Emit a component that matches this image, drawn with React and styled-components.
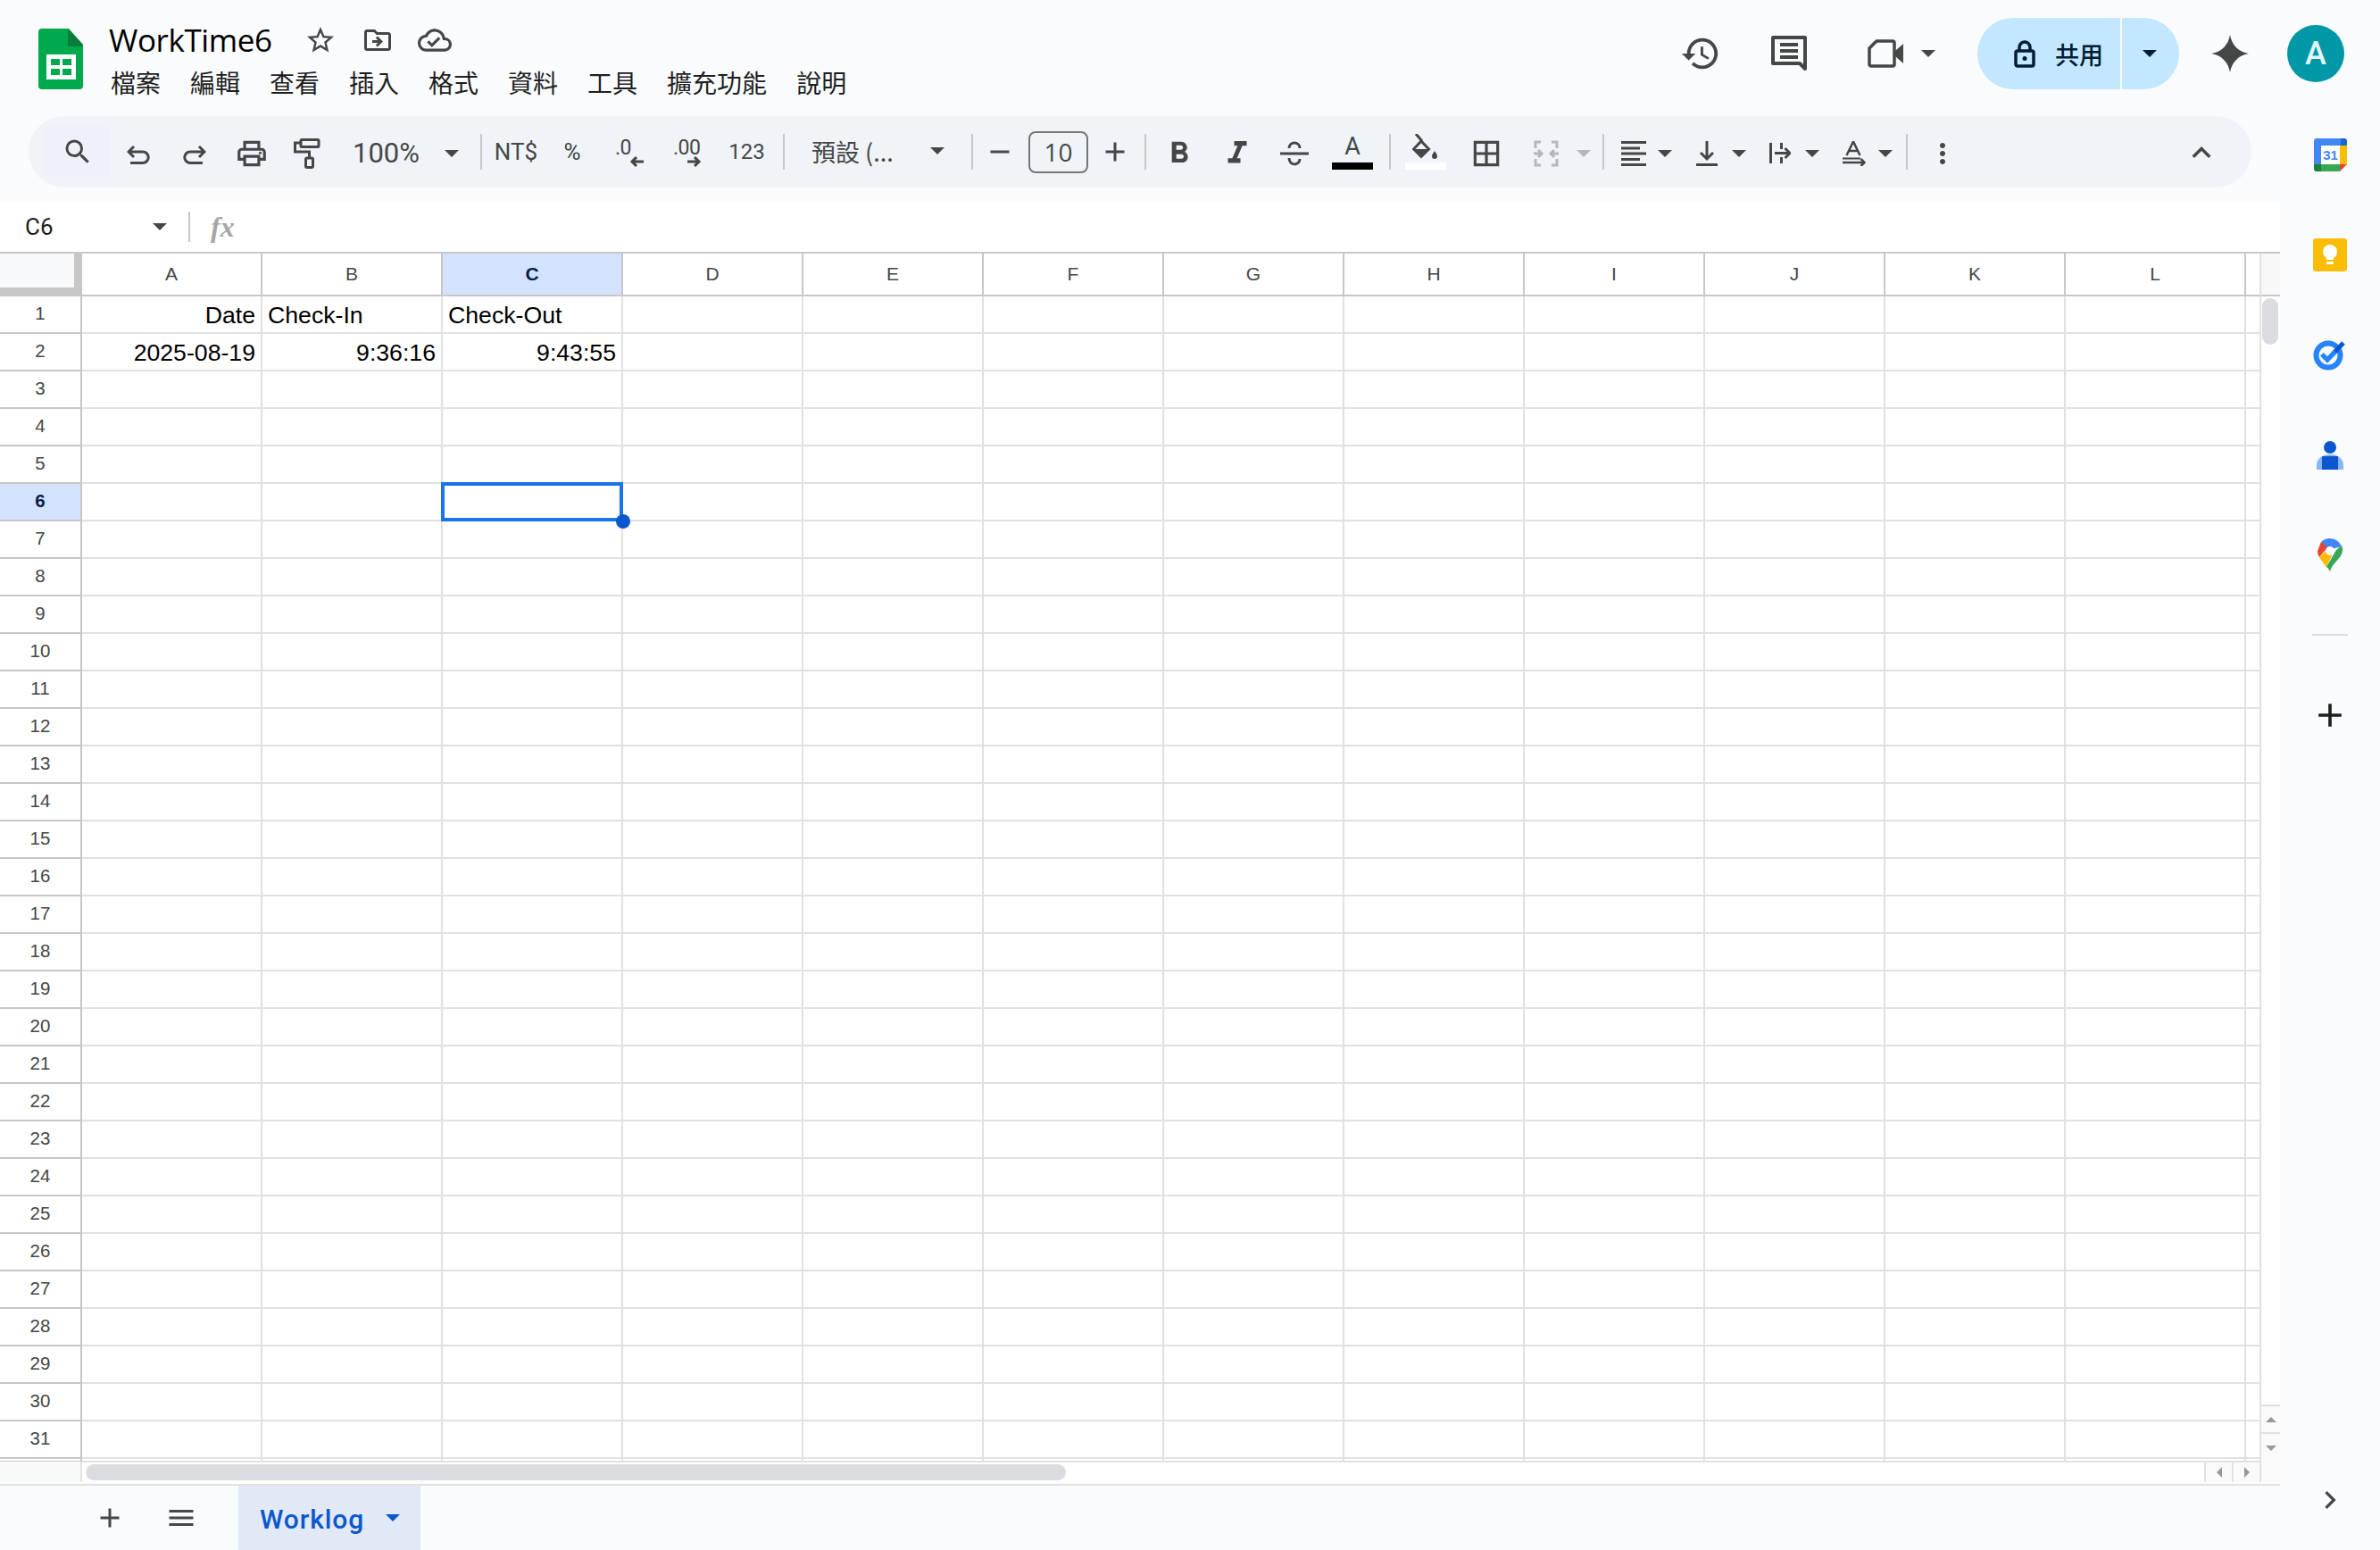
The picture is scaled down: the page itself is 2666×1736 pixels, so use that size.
import React from "react";
import styled, { createGlobalStyle } from "styled-components";
import {
  MdSearch,
  MdOutlinePrint,
  MdFormatBold,
  MdFormatItalic,
  MdBorderAll,
  MdKeyboardArrowUp,
  MdMoreVert,
  MdStarBorder,
  MdOutlineDriveFileMove,
  MdOutlineCloudDone,
  MdHistory,
  MdAdd,
  MdMenu,
  MdChevronRight,
  MdRemove,
} from "react-icons/md";

const INK = "#444746";
const UI_FONT = `"Open Sans", "Noto Sans CJK TC", sans-serif`;
const CJK_FONT = `"Noto Sans CJK TC", "Noto Sans", sans-serif`;
const CELL_FONT = `"Liberation Sans", Arial, sans-serif`;
const LINE = "#e1e1e1";
const HEAD_LINE = "#c7c7c7";

const GlobalStyle = createGlobalStyle`
  html, body { margin: 0; padding: 0; background: #f9fbfd; }
  * { box-sizing: border-box; }
`;

const Page = styled.div`
  width: 2666px;
  height: 1736px;
  overflow: hidden;
  background: #f9fbfd;
  display: flex;
  flex-direction: column;
  color: ${INK};
  font-family: ${UI_FONT};
`;

/* top header */
const Header = styled.header`
  height: 130px;
  flex: none;
  display: flex;
  padding-left: 43px;
`;
const LogoBox = styled.div`
  width: 50px;
  padding-top: 32px;
  margin-right: 29px;
`;
const TitleBlock = styled.div`
  padding-top: 23px;
`;
const TitleRow = styled.div`
  display: flex;
  align-items: center;
  height: 44px;
`;
const DocTitle = styled.div`
  font-size: 35px;
  line-height: 44px;
  color: #000;
  width: 220px;
  letter-spacing: -0.4px;
`;
const TitleIcon = styled.div`
  width: 64px;
  display: flex;
  justify-content: center;
  font-size: ${(p) => p.$size || 36}px;
  color: ${INK};
  margin-left: ${(p) => p.$ml || 0}px;
`;
const MenuRow = styled.nav`
  display: flex;
  gap: 33px;
  margin-top: 5px;
  padding-left: 2px;
`;
const MenuItem = styled.span`
  font-family: ${CJK_FONT};
  font-size: 28px;
  line-height: 40px;
  color: #1f1f1f;
`;
const HeaderRight = styled.div`
  margin-left: auto;
  display: flex;
  align-items: center;
  height: 80px;
  margin-top: 20px;
  padding-right: 40px;
`;
const HeaderBtn = styled.div`
  width: ${(p) => p.$w}px;
  display: flex;
  justify-content: center;
  align-items: center;
  color: ${INK};
  font-size: 46px;
`;
const MeetBtn = styled.div`
  width: 161px;
  padding-left: 38px;
  display: flex;
  align-items: center;
  gap: 20px;
`;
const ShareBtn = styled.div`
  width: 226px;
  height: 80px;
  display: flex;
  color: #001d35;
`;
const ShareMain = styled.div`
  width: 160px;
  background: #c2e7ff;
  border-radius: 40px 0 0 40px;
  display: flex;
  align-items: center;
  padding-left: 41px;
  gap: 22px;
`;
const ShareLabel = styled.span`
  font-family: ${CJK_FONT};
  font-size: 27px;
  font-weight: 500;
`;
const ShareArrow = styled.div`
  margin-left: 2px;
  flex: 1;
  background: #c2e7ff;
  border-radius: 0 40px 40px 0;
  display: flex;
  align-items: center;
  justify-content: center;
  padding-right: 2px;
`;
const Avatar = styled.div`
  width: 64px;
  height: 64px;
  margin-left: 7px;
  border-radius: 50%;
  background: #0097a7;
  color: #e3f6f8;
  display: flex;
  align-items: center;
  justify-content: center;
  font-family: "Roboto", sans-serif;
  font-weight: 500;
  font-size: 36px;
`;

const Caret = styled.span`
  display: block;
  flex: none;
  width: 0;
  height: 0;
  border-left: 8px solid transparent;
  border-right: 8px solid transparent;
  border-top: 8px solid ${(p) => p.$color || INK};
`;

/* body */
const Body = styled.div`
  flex: 1;
  display: flex;
  min-height: 0;
`;
const Main = styled.main`
  width: 2554px;
  flex: none;
  display: flex;
  flex-direction: column;
`;

/* toolbar */
const Toolbar = styled.div`
  width: 2490px;
  height: 80px;
  margin: 0 0 16px 32px;
  flex: none;
  padding-left: 18px;
  background: #f0f4f9;
  border-radius: 40px;
  display: flex;
  align-items: center;
  font-size: 36px;
  color: ${INK};
`;
const ToolBtn = styled.div`
  width: ${(p) => p.$w}px;
  height: 56px;
  flex: none;
  display: flex;
  align-items: center;
  justify-content: center;
  background: ${(p) => (p.$active ? "#edf1fa" : "transparent")};
  font-size: ${(p) => p.$size || 36}px;
  padding-top: ${(p) => p.$dy || 0}px;
`;
const DropBtn = styled.div`
  width: ${(p) => p.$w}px;
  height: 56px;
  flex: none;
  display: flex;
  align-items: center;
  padding-left: ${(p) => p.$pl}px;
  padding-top: 3px;
  gap: ${(p) => p.$gap}px;
  font-size: 36px;
`;
const ToolText = styled.span`
  font-size: ${(p) => p.$size || 26}px;
  font-family: ${(p) => (p.$cjk ? CJK_FONT : `"Roboto", sans-serif`)};
  white-space: nowrap;
`;
const FontDrop = styled.div`
  width: 209px;
  flex: none;
  padding: 0 30px 2px;
  display: flex;
  align-items: center;
  justify-content: space-between;
`;
const ToolSep = styled.div`
  width: 2px;
  height: 40px;
  flex: none;
  margin-left: ${(p) => p.$ml || 0}px;
  background: ${HEAD_LINE};
`;
const SizeBox = styled.div`
  width: 67px;
  height: 47px;
  margin-left: 2px;
  flex: none;
  border: 2px solid #747775;
  border-radius: 8px;
  display: flex;
  align-items: center;
  justify-content: center;
  font-size: 28px;
  font-family: ${UI_FONT};
`;
const ColorStack = styled.div`
  display: flex;
  flex-direction: column;
  align-items: center;
  width: 46px;
  height: 40px;
  justify-content: space-between;
`;
const ColorLetter = styled.span`
  font-family: "Roboto", sans-serif;
  font-size: 27px;
  line-height: 28px;
`;
const ColorBar = styled.div`
  width: 46px;
  height: 8px;
  flex: none;
  background: ${(p) => p.$color};
`;
const DecimalIcon = styled.div`
  width: 32px;
  display: flex;
  flex-direction: column;
  height: 30px;
  line-height: 18px;
  font-family: "Roboto", sans-serif;
  font-size: 23px;
  justify-content: space-between;
  letter-spacing: -0.5px;
`;
const DecimalArrow = styled.div`
  align-self: flex-end;
  line-height: 0;
`;
const ChevronBtn = styled(ToolBtn)`
  margin-left: auto;
  font-size: 42px;
`;

/* formula bar */
const FormulaBar = styled.div`
  height: 56px;
  flex: none;
  background: #fff;
  display: flex;
  align-items: center;
`;
const NameBox = styled.div`
  width: 211px;
  padding: 0 24px 0 28px;
  display: flex;
  align-items: center;
  justify-content: space-between;
  font-size: 26px;
  color: #1f1f1f;
  font-family: "Roboto", sans-serif;
`;
const FormulaSep = styled.div`
  width: 2px;
  height: 34px;
  background: ${HEAD_LINE};
`;
const FxMark = styled.span`
  margin-left: 23px;
  font-family: "Liberation Serif", serif;
  font-style: italic;
  font-weight: 700;
  font-size: 32px;
  color: #a6a6a6;
`;

/* sheet */
const SheetRow = styled.div`
  display: flex;
  flex: none;
  border-top: 2px solid ${HEAD_LINE};
  background: #fff;
`;
const Grid = styled.div`
  display: grid;
  grid-template-columns: 92px repeat(12, 202px) 17px;
  grid-template-rows: 48px repeat(31, 42px) 3px;
  flex: none;
`;
const Corner = styled.div`
  background: ${HEAD_LINE};
`;
const CornerInner = styled.div`
  width: 83px;
  height: 38px;
  background: #f8f9fa;
`;
const ColHead = styled.div`
  border-right: 2px solid ${HEAD_LINE};
  border-bottom: 2px solid ${HEAD_LINE};
  background: ${(p) => (p.$selected ? "#d3e3fd" : "#fff")};
  color: ${(p) => (p.$selected ? "#041e49" : INK)};
  font-weight: ${(p) => (p.$selected ? 700 : 400)};
  font-family: ${CELL_FONT};
  font-size: 21px;
  display: flex;
  align-items: center;
  justify-content: center;
`;
const RowHead = styled(ColHead)`
  font-size: 20.5px;
  padding-bottom: 2px;
`;
const ColEnd = styled.div`
  border-right: 2px solid ${LINE};
  border-bottom: 2px solid ${HEAD_LINE};
`;
const Cell = styled.div`
  position: relative;
  border-right: 2px solid ${LINE};
  border-bottom: 2px solid ${LINE};
  padding: 2px 6px 0;
  display: flex;
  align-items: center;
  justify-content: ${(p) => (p.$right ? "flex-end" : "flex-start")};
  font-family: ${CELL_FONT};
  font-size: 26.67px;
  color: #000;
  white-space: nowrap;
`;
const Selection = styled.div`
  position: absolute;
  left: -2px;
  top: -2px;
  right: -2px;
  bottom: -2px;
  border: 4px solid #1a73e8;
  z-index: 2;
`;
const SelectionHandle = styled.div`
  position: absolute;
  right: -12px;
  bottom: -12px;
  width: 16px;
  height: 16px;
  border-radius: 50%;
  background: #0b57d0;
`;
const VScroll = styled.div`
  width: 21px;
  display: flex;
  flex-direction: column;
  background: #fff;
`;
const VScrollHead = styled.div`
  height: 48px;
  flex: none;
  background: #f8f8f8;
  border-bottom: 2px solid ${HEAD_LINE};
`;
const VThumb = styled.div`
  width: 18px;
  height: 52px;
  margin: 2px 0 0 1px;
  border-radius: 9px;
  background: #dadce0;
`;
const VArrows = styled.div`
  margin-top: auto;
`;
const ScrollBtn = styled.div`
  height: ${(p) => p.$h || 31}px;
  background: #fafafa;
  border-top: 2px solid ${LINE};
  display: flex;
  align-items: center;
  justify-content: center;
`;
const Tri = styled.span`
  display: block;
  width: 0;
  height: 0;
  border-left: 6px solid ${(p) => (p.$dir === "right" ? "#999" : "transparent")};
  border-right: 6px solid ${(p) => (p.$dir === "left" ? "#999" : "transparent")};
  border-top: 6px solid ${(p) => (p.$dir === "down" ? "#999" : "transparent")};
  border-bottom: 6px solid ${(p) => (p.$dir === "up" ? "#999" : "transparent")};
  ${(p) => (p.$dir === "up" ? "border-top-width: 0;" : "")}
  ${(p) => (p.$dir === "down" ? "border-bottom-width: 0;" : "")}
  ${(p) => (p.$dir === "left" ? "border-left-width: 0;" : "")}
  ${(p) => (p.$dir === "right" ? "border-right-width: 0;" : "")}
`;
const HScrollRow = styled.div`
  height: 25px;
  flex: none;
  display: flex;
  background: #fff;
  border-bottom: 2px solid #fff;
`;
const HLeft = styled.div`
  width: 92px;
  flex: none;
  background: #f8f9fa;
  border-right: 2px solid ${LINE};
`;
const HTrack = styled.div`
  flex: 1;
  padding: 3px 0 0 4px;
`;
const HThumb = styled.div`
  width: 1098px;
  height: 18px;
  border-radius: 9px;
  background: #dadce0;
`;
const HBtn = styled.div`
  width: ${(p) => p.$w}px;
  flex: none;
  background: #fafafa;
  border-left: 2px solid ${LINE};
  display: flex;
  align-items: center;
  justify-content: center;
`;

/* tabs */
const TabBar = styled.div`
  flex: 1;
  border-top: 2px solid #e1e3e1;
  display: flex;
  align-items: stretch;
`;
const TabTool = styled.div`
  width: ${(p) => p.$w}px;
  flex: none;
  display: flex;
  align-items: center;
  justify-content: center;
  font-size: 36px;
  color: ${INK};
`;
const SheetTab = styled.div`
  width: 204px;
  flex: none;
  background: #e1e9f7;
  display: flex;
  align-items: center;
  padding-left: 24px;
  gap: 24px;
  color: #0b57d0;
`;
const TabName = styled.span`
  font-family: "Roboto", sans-serif;
  font-weight: 500;
  font-size: 30px;
  letter-spacing: 0.9px;
  padding-top: 2px;
`;

/* right rail */
const SideRail = styled.aside`
  flex: 1;
  display: flex;
  flex-direction: column;
  align-items: center;
  padding-top: 25px;
`;
const RailIcon = styled.div`
  height: 37px;
  margin-bottom: ${(p) => p.$mb}px;
  display: flex;
  align-items: center;
  justify-content: center;
`;
const RailDivider = styled.div`
  width: 40px;
  height: 2px;
  background: #dadce0;
  margin-bottom: 67px;
`;
const RailPlus = styled.div`
  font-size: 44px;
  line-height: 0;
  color: #1f1f1f;
`;
const RailFoot = styled.div`
  margin-top: auto;
  padding-bottom: 36px;
  font-size: 40px;
  line-height: 0;
  color: ${INK};
`;

/* drawings */
const Stroke = ({ w = 36, h = 36, sw = 3, color = "currentColor", children }) => (
  <svg width={w} height={h} viewBox={`0 0 ${w} ${h}`} fill="none" stroke={color} strokeWidth={sw}>
    {children}
  </svg>
);

const SheetsLogo = () => (
  <svg width="50" height="68" viewBox="0 0 50 68">
    <path d="M4 0h30l16 18v46a4 4 0 0 1-4 4H4a4 4 0 0 1-4-4V4a4 4 0 0 1 4-4z" fill="#00a94b" />
    <path d="M33 0l17 18v2H33z" fill="#0a7d3a" />
    <path d="M9 29h33v28H9z" fill="#fff" />
    <path d="M14 34h10v7H14zM27 34h10v7H27zM14 45h10v7H14zM27 45h10v7H27z" fill="#00a94b" />
  </svg>
);
const CommentIcon = () => (
  <Stroke w={40} h={40} sw={4}>
    <path d="M2 2h36v35l-6-6H2z" strokeLinejoin="round" />
    <path d="M10 10h20M10 17h20M10 24h20" />
  </Stroke>
);
const MeetIcon = () => (
  <Stroke w={40} h={32} sw={3.5}>
    <path d="M10 2h18a2 2 0 0 1 2 2v24a2 2 0 0 1-2 2H4a2 2 0 0 1-2-2V10z" strokeLinejoin="round" />
    <path d="M31 13l9-8v22l-9-8z" fill="currentColor" stroke="none" />
  </Stroke>
);
const SparkIcon = () => (
  <svg width="42" height="42" viewBox="0 0 42 42">
    <path d="M21 0c2 11 9 19 21 21-12 2-19 10-21 21-2-11-9-19-21-21C12 19 19 11 21 0z" fill={INK} />
  </svg>
);
const LockIcon = () => (
  <Stroke w={24} h={31} sw={3.5}>
    <path d="M6 12V8a6 6 0 0 1 12 0v4" />
    <rect x="2" y="12" width="20" height="17" rx="2" />
    <circle cx="12" cy="20.5" r="2.5" fill="currentColor" stroke="none" />
  </Stroke>
);
const UndoIcon = ({ flip }) => (
  <Stroke w={26} h={22}>
    <g transform={flip ? "matrix(-1 0 0 1 26 0)" : undefined}>
      <path d="M8 2L2 8l6 6M2 8h16a6 6 0 0 1 0 12.5H4" />
    </g>
  </Stroke>
);
const RollerIcon = () => (
  <Stroke w={30} h={34} sw={3}>
    <rect x="8" y="1.5" width="20" height="8" rx="1" />
    <path d="M8 5H1.5v10H17.5v7" />
    <rect x="13.5" y="22" width="8" height="10.5" rx="1.5" />
  </Stroke>
);
const StrikeIcon = () => (
  <Stroke w={34} h={34}>
    <path d="M1 17h32" />
    <path d="M11 11c0-8 12-8 12 0M11 22c0 9 12 9 12 1" />
  </Stroke>
);
const BucketIcon = () => (
  <svg width="30" height="28" viewBox="0 0 30 28">
    <path d="M4 0l7 8" fill="none" stroke={INK} strokeWidth="3" />
    <path d="M10 8l8.5 9L10 25.5 1.5 17z" fill="none" stroke={INK} strokeWidth="3" />
    <path d="M1 17h18L10 26z" fill={INK} />
    <path d="M25 19c2 3 3 4 3 6a3 3 0 0 1-6 0c0-2 1-3 3-6z" fill={INK} />
  </svg>
);
const MergeIcon = () => (
  <Stroke w={30} h={30} color="#b4b7b9">
    <path d="M9 2H3v7M21 2h6v7M9 28H3v-7M21 28h6v-7" />
    <path d="M1 15h9M6 11l4 4-4 4M29 15h-9M24 11l-4 4 4 4" />
  </Stroke>
);
const AlignIcon = () => (
  <Stroke w={28} h={28}>
    <path d="M0 1.5h28M0 8h21M0 14h28M0 20.5h21M0 26.5h28" />
  </Stroke>
);
const VAlignIcon = () => (
  <Stroke w={24} h={28}>
    <path d="M12 0v20M5 13l7 7 7-7" />
    <path d="M0 26.5h24" />
  </Stroke>
);
const WrapIcon = () => (
  <Stroke w={24} h={24}>
    <path d="M1.5 0v23M13.5 0v7M13.5 16v7M6 11.5h17M17.5 6l5.5 5.5-5.5 5.5" />
  </Stroke>
);
const RotateIcon = () => (
  <Stroke w={26} h={28} sw={2.5}>
    <path d="M4.5 16L12 0.5 19.5 16M7 11h10" />
    <path d="M0 19.5h20" strokeWidth="2" />
    <path d="M0 24h24M20.5 20l4 4-4 4" />
  </Stroke>
);
const SmallArrow = ({ left }) => (
  <svg width="16" height="12" viewBox="0 0 16 12" fill="none" stroke={INK} strokeWidth="3">
    {left ? <path d="M16 6H3M8 1L3 6l5 5" /> : <path d="M0 6h13M8 1l5 5-5 5" />}
  </svg>
);

const CalendarIcon = () => (
  <svg width="37" height="37" viewBox="0 0 37 37">
    <path d="M3 0h28v8H8v21H0V3a3 3 0 0 1 3-3z" fill="#4285f4" />
    <path d="M30 0h4a3 3 0 0 1 3 3v5h-7z" fill="#1967d2" />
    <path d="M29 8h8v21h-8z" fill="#fbbc04" />
    <path d="M8 29h21v8H8z" fill="#34a853" />
    <path d="M0 29h8v8H3a3 3 0 0 1-3-3z" fill="#188038" />
    <path d="M29 29h8l-8 8z" fill="#ea4335" />
    <rect x="8" y="8" width="21" height="21" fill="#fff" />
    <text x="18.5" y="24" textAnchor="middle" fontFamily="Liberation Sans" fontWeight="700" fontSize="15" fill="#4285f4">31</text>
  </svg>
);
const KeepIcon = () => (
  <svg width="38" height="37" viewBox="0 0 38 37">
    <rect width="38" height="37" rx="3" fill="#fbbc04" />
    <circle cx="19" cy="15" r="8" fill="#fff" />
    <path d="M15 20h8v4h-8zM15 26h8v3h-8z" fill="#fff" />
  </svg>
);
const TasksIcon = () => (
  <svg width="38" height="36" viewBox="0 0 38 36">
    <circle cx="17" cy="19" r="13.5" fill="none" stroke="#2684fc" strokeWidth="6" />
    <path d="M10 18l6 6L34 5" fill="none" stroke="#0b57d0" strokeWidth="5" />
    <path d="M10 18l6 6 9-9" fill="none" stroke="#2684fc" strokeWidth="5" />
  </svg>
);
const ContactsIcon = () => (
  <svg width="30" height="32" viewBox="0 0 30 32">
    <path d="M0 32v-5c0-6 5-12 15-12s15 6 15 12v5z" fill="#8ab4f8" />
    <path d="M6 32V17h18v15z" fill="#0b57d0" />
    <circle cx="15" cy="7" r="7" fill="#0b57d0" />
  </svg>
);
const MapsIcon = () => (
  <svg width="28" height="37" viewBox="0 0 28 37">
    <path d="M14 0a14 14 0 0 1 13 9L8 14 4 4a14 14 0 0 1 10-4z" fill="#4285f4" />
    <path d="M4 4L0 14c0 3 1 5 2 7l9-11z" fill="#ea4335" />
    <path d="M2 21c2 4 5 7 8 11l8-17-7-3z" fill="#fbbc04" />
    <path d="M27 8c2 4 1 9-2 13-4 5-9 9-11 16-1-2-2-4-4-5l11-19z" fill="#34a853" />
    <circle cx="14" cy="14" r="5" fill="#fff" />
  </svg>
);

const COLUMNS = "ABCDEFGHIJKL".split("");
const ROWS = Array.from({ length: 31 }, (_, i) => i + 1);
const DATA = {
  A1: { text: "Date", right: true },
  B1: { text: "Check-In" },
  C1: { text: "Check-Out" },
  A2: { text: "2025-08-19", right: true },
  B2: { text: "9:36:16", right: true },
  C2: { text: "9:43:55", right: true },
};
const MENUS = ["檔案", "編輯", "查看", "插入", "格式", "資料", "工具", "擴充功能", "說明"];

const SheetGrid = () => (
  <Grid>
    <Corner>
      <CornerInner />
    </Corner>
    {COLUMNS.map((c) => (
      <ColHead key={c} $selected={c === "C"}>{c}</ColHead>
    ))}
    <ColEnd />
    {ROWS.map((r) => (
      <React.Fragment key={r}>
        <RowHead $selected={r === 6}>{r}</RowHead>
        {COLUMNS.map((c) => {
          const cell = DATA[c + r];
          return (
            <Cell key={c} $right={cell && cell.right}>
              {cell && cell.text}
              {c === "C" && r === 6 && (
                <Selection>
                  <SelectionHandle />
                </Selection>
              )}
            </Cell>
          );
        })}
        <Cell />
      </React.Fragment>
    ))}
    <RowHead />
    {COLUMNS.map((c) => (
      <Cell key={c} />
    ))}
    <Cell />
  </Grid>
);

const App = () => {
  return (
    <Page>
      <GlobalStyle />
      <Header>
        <LogoBox>
          <SheetsLogo />
        </LogoBox>
        <TitleBlock>
          <TitleRow>
            <DocTitle>WorkTime6</DocTitle>
            <TitleIcon $ml={-15}><MdStarBorder /></TitleIcon>
            <TitleIcon><MdOutlineDriveFileMove /></TitleIcon>
            <TitleIcon $size={38}><MdOutlineCloudDone /></TitleIcon>
          </TitleRow>
          <MenuRow>
            {MENUS.map((m) => (
              <MenuItem key={m}>{m}</MenuItem>
            ))}
          </MenuRow>
        </TitleBlock>
        <HeaderRight>
          <HeaderBtn $w={97}><MdHistory /></HeaderBtn>
          <HeaderBtn $w={101}><CommentIcon /></HeaderBtn>
          <MeetBtn>
            <MeetIcon />
            <Caret />
          </MeetBtn>
          <ShareBtn>
            <ShareMain>
              <LockIcon />
              <ShareLabel>共用</ShareLabel>
            </ShareMain>
            <ShareArrow>
              <Caret $color="#001d35" />
            </ShareArrow>
          </ShareBtn>
          <HeaderBtn $w={114}><SparkIcon /></HeaderBtn>
          <Avatar>A</Avatar>
        </HeaderRight>
      </Header>
      <Body>
        <Main>
          <Toolbar>
            <ToolBtn $w={74} $active><MdSearch /></ToolBtn>
            <ToolBtn $w={62} $dy={6}><UndoIcon /></ToolBtn>
            <ToolBtn $w={64} $dy={6}><UndoIcon flip /></ToolBtn>
            <ToolBtn $w={64} $size={38} $dy={3}><MdOutlinePrint /></ToolBtn>
            <ToolBtn $w={60} $dy={3}><RollerIcon /></ToolBtn>
            <DropBtn $w={164} $pl={21} $gap={28}>
              <ToolText $size={31}>100%</ToolText>
              <Caret />
            </DropBtn>
            <ToolSep />
            <ToolBtn $w={76}><ToolText>NT$</ToolText></ToolBtn>
            <ToolBtn $w={50}><ToolText>%</ToolText></ToolBtn>
            <ToolBtn $w={78} $dy={4}>
              <DecimalIcon>
                <span>.0</span>
                <DecimalArrow><SmallArrow left /></DecimalArrow>
              </DecimalIcon>
            </ToolBtn>
            <ToolBtn $w={52} $dy={4}>
              <DecimalIcon>
                <span>.00</span>
                <DecimalArrow><SmallArrow /></DecimalArrow>
              </DecimalIcon>
            </ToolBtn>
            <ToolBtn $w={81}><ToolText $size={24}>123</ToolText></ToolBtn>
            <ToolSep />
            <FontDrop>
              <ToolText $cjk $size={27}>預設 (...</ToolText>
              <Caret />
            </FontDrop>
            <ToolSep />
            <ToolBtn $w={60}><MdRemove /></ToolBtn>
            <SizeBox>10</SizeBox>
            <ToolBtn $w={60}><MdAdd /></ToolBtn>
            <ToolSep $ml={3} />
            <ToolBtn $w={74} $size={40} $dy={4}><MdFormatBold /></ToolBtn>
            <ToolBtn $w={56} $size={42} $dy={3}><MdFormatItalic /></ToolBtn>
            <ToolBtn $w={72} $dy={3}><StrikeIcon /></ToolBtn>
            <ToolBtn $w={58}>
              <ColorStack>
                <ColorLetter>A</ColorLetter>
                <ColorBar $color="#000" />
              </ColorStack>
            </ToolBtn>
            <ToolSep $ml={12} />
            <ToolBtn $w={78}>
              <ColorStack>
                <BucketIcon />
                <ColorBar $color="#fff" />
              </ColorStack>
            </ToolBtn>
            <ToolBtn $w={58} $size={38} $dy={4}><MdBorderAll /></ToolBtn>
            <DropBtn $w={101} $pl={23} $gap={19}>
              <MergeIcon />
              <Caret $color="#b4b7b9" />
            </DropBtn>
            <ToolSep />
            <DropBtn $w={85} $pl={19} $gap={13}>
              <AlignIcon />
              <Caret />
            </DropBtn>
            <DropBtn $w={83} $pl={18} $gap={16}>
              <VAlignIcon />
              <Caret />
            </DropBtn>
            <DropBtn $w={82} $pl={17} $gap={16}>
              <WrapIcon />
              <Caret />
            </DropBtn>
            <DropBtn $w={88} $pl={17} $gap={14}>
              <RotateIcon />
              <Caret />
            </DropBtn>
            <ToolSep />
            <ToolBtn $w={78} $dy={3}><MdMoreVert /></ToolBtn>
            <ChevronBtn $w={112} $dy={2}><MdKeyboardArrowUp /></ChevronBtn>
          </Toolbar>
          <FormulaBar>
            <NameBox>
              C6
              <Caret />
            </NameBox>
            <FormulaSep />
            <FxMark>fx</FxMark>
          </FormulaBar>
          <SheetRow>
            <SheetGrid />
            <VScroll>
              <VScrollHead />
              <VThumb />
              <VArrows>
                <ScrollBtn><Tri $dir="up" /></ScrollBtn>
                <ScrollBtn $h={33}><Tri $dir="down" /></ScrollBtn>
              </VArrows>
            </VScroll>
          </SheetRow>
          <HScrollRow>
            <HLeft />
            <HTrack>
              <HThumb />
            </HTrack>
            <HBtn $w={31}><Tri $dir="left" /></HBtn>
            <HBtn $w={31}><Tri $dir="right" /></HBtn>
            <HBtn $w={23} />
          </HScrollRow>
          <TabBar>
            <TabTool $w={81} />
            <TabTool $w={84}><MdAdd /></TabTool>
            <TabTool $w={76}><MdMenu /></TabTool>
            <TabTool $w={26} />
            <SheetTab>
              <TabName>Worklog</TabName>
              <Caret $color="#0b57d0" />
            </SheetTab>
          </TabBar>
        </Main>
        <SideRail>
          <RailIcon $mb={75}><CalendarIcon /></RailIcon>
          <RailIcon $mb={74}><KeepIcon /></RailIcon>
          <RailIcon $mb={76}><TasksIcon /></RailIcon>
          <RailIcon $mb={75}><ContactsIcon /></RailIcon>
          <RailIcon $mb={70}><MapsIcon /></RailIcon>
          <RailDivider />
          <RailPlus><MdAdd /></RailPlus>
          <RailFoot><MdChevronRight /></RailFoot>
        </SideRail>
      </Body>
    </Page>
  );
};

export default App;
